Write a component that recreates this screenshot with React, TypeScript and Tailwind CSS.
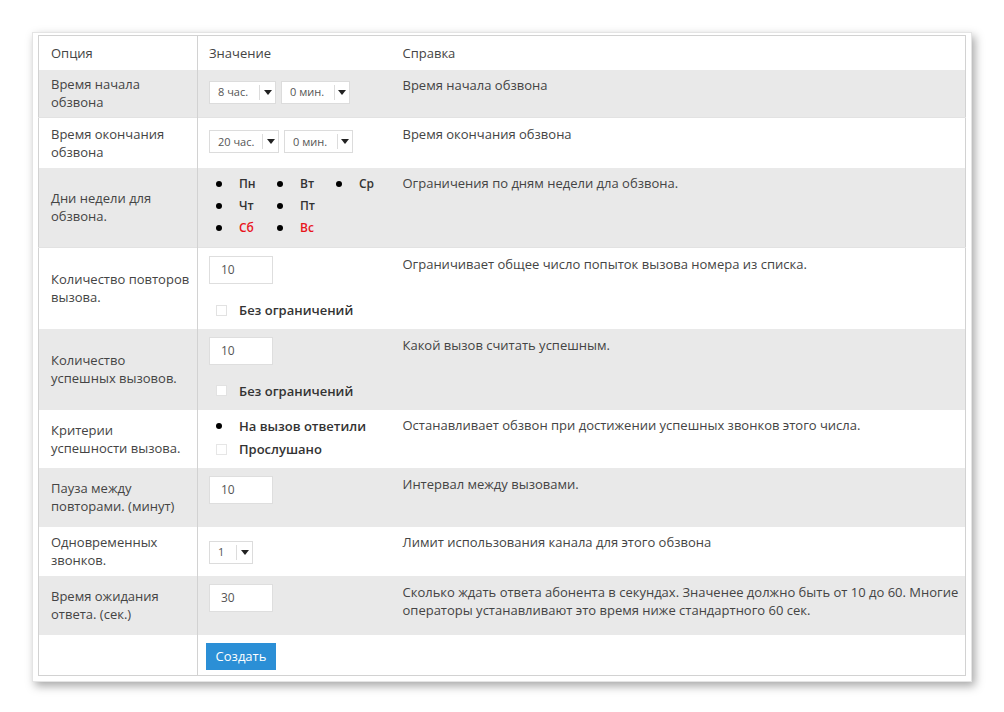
const rowCls = "align-top";
const labelCls = "border-r border-[#d2d2d2] pl-[12px] pr-[6px] align-middle";

function Select({ label, w, split }: { label: string; w: number; split: number }) {
  return (
    <div
      className="inline-flex h-[23px] items-center border border-[#dcdcdc] bg-white text-[11px] text-[#555]"
      style={{ width: w }}
    >
      <span className="pl-[8px]" style={{ width: split }}>
        {label}
      </span>
      <span className="flex h-[15px] flex-1 items-center justify-center border-l border-[#dcdcdc]">
        <span className="h-0 w-0 border-x-[4px] border-t-[5px] border-x-transparent border-t-[#222]" />
      </span>
    </div>
  );
}

function NumInput({ value }: { value: string }) {
  return (
    <div className="flex h-[28px] w-[64px] items-center border border-[#dedede] bg-white pl-[11px] text-[12px] text-[#555]">
      {value}
    </div>
  );
}

function Check({ label }: { label: string }) {
  return (
    <div className="flex items-center leading-[18px]">
      <span className="ml-[7px] h-[11px] w-[11px] border border-[#e2e2e2] bg-white" />
      <span className="ml-[12px] font-semibold text-[#333]">{label}</span>
    </div>
  );
}

function Dot() {
  return <span className="ml-[7px] h-[6px] w-[6px] rounded-full bg-black" />;
}

function Day({ label, red }: { label: string; red?: boolean }) {
  return (
    <div className="flex items-center">
      <Dot />
      <span className={"ml-[17px] font-semibold " + (red ? "text-[#e8141b]" : "text-[#333]")}>{label}</span>
    </div>
  );
}

export default function App() {
  return (
    <div className="min-h-screen bg-white pl-[32px] pt-[32px] font-['Open_Sans',sans-serif] text-[13px] text-[#444]">
      <div className="w-[940px] border border-[#e4e4e4] bg-white pb-[5px] pl-[5px] pr-[5px] pt-[2px] shadow-[3px_4px_9px_rgba(0,0,0,0.35)]">
        <table className="w-[928px] table-fixed border-collapse border border-[#d2d2d2] leading-[18px]">
          <colgroup>
            <col className="w-[159px]" />
            <col className="w-[195px]" />
            <col />
          </colgroup>
          <tbody>
            {/* header */}
            <tr className="h-[34px]">
              <td className="border-r border-[#d2d2d2] pl-[12px] align-middle">Опция</td>
              <td className="pl-[11px] align-middle">Значение</td>
              <td className="pl-[10px] align-middle">Справка</td>
            </tr>

            <tr className={"h-[48px] bg-[#e9e9e9] " + rowCls}>
              <td className={labelCls}>Время начала обзвона</td>
              <td className="pl-[11px] pt-[11px]">
                <div className="flex gap-[5px]">
                  <Select label="8 час." w={67} split={49} />
                  <Select label="0 мин." w={69} split={52} />
                </div>
              </td>
              <td className="pl-[10px] pt-[6px]">Время начала обзвона</td>
            </tr>

            <tr className={"h-[50px] border-t border-[#e2e2e2] " + rowCls}>
              <td className={labelCls}>Время окончания обзвона</td>
              <td className="pl-[11px] pt-[12px]">
                <div className="flex gap-[5px]">
                  <Select label="20 час." w={70} split={52} />
                  <Select label="0 мин." w={69} split={52} />
                </div>
              </td>
              <td className="pl-[10px] pt-[7px]">Время окончания обзвона</td>
            </tr>

            <tr className={"h-[80px] bg-[#e9e9e9] " + rowCls}>
              <td className={labelCls}>Дни недели для обзвона.</td>
              <td className="pl-[11px] pt-[5px]">
                <div className="grid grid-cols-[61px_59px_60px] text-[12px] leading-[22px]">
                  <Day label="Пн" />
                  <Day label="Вт" />
                  <Day label="Ср" />
                  <Day label="Чт" />
                  <Day label="Пт" />
                  <div />
                  <Day label="Сб" red />
                  <Day label="Вс" red />
                </div>
              </td>
              <td className="pl-[10px] pt-[6px]">Ограничения по дням недели дла обзвона.</td>
            </tr>

            <tr className={"h-[81px] border-t border-[#e2e2e2] " + rowCls}>
              <td className={labelCls}>Количество повторов вызова.</td>
              <td className="pl-[11px] pt-[8px]">
                <NumInput value="10" />
                <div className="mt-[17px]">
                  <Check label="Без ограничений" />
                </div>
              </td>
              <td className="pl-[10px] pt-[7px]">Ограничивает общее число попыток вызова номера из списка.</td>
            </tr>

            <tr className={"h-[81px] bg-[#e9e9e9] " + rowCls}>
              <td className={labelCls}>Количество успешных вызовов.</td>
              <td className="pl-[11px] pt-[8px]">
                <NumInput value="10" />
                <div className="mt-[17px]">
                  <Check label="Без ограничений" />
                </div>
              </td>
              <td className="pl-[10px] pt-[7px]">Какой вызов считать успешным.</td>
            </tr>

            <tr className={"h-[58px] " + rowCls}>
              <td className={labelCls}>Критерии успешности вызова.</td>
              <td className="pl-[11px] pt-[5px]">
                <div className="flex items-center leading-[23px]">
                  <Dot />
                  <span className="ml-[17px] font-semibold text-[#333]">На вызов ответили</span>
                </div>
                <div className="flex items-center leading-[23px]">
                  <span className="ml-[7px] h-[11px] w-[11px] border border-[#e6e6e6] bg-white" />
                  <span className="ml-[12px] font-semibold text-[#333]">Прослушано</span>
                </div>
              </td>
              <td className="pl-[10px] pt-[6px]">
                Останавливает обзвон при достижении успешных звонков этого числа.
              </td>
            </tr>

            <tr className={"h-[59px] bg-[#e9e9e9] " + rowCls}>
              <td className={labelCls}>Пауза между повторами. (минут)</td>
              <td className="pl-[11px] pt-[8px]">
                <NumInput value="10" />
              </td>
              <td className="pl-[10px] pt-[7px]">Интервал между вызовами.</td>
            </tr>

            <tr className={"h-[49px] " + rowCls}>
              <td className={labelCls}>Одновременных звонков.</td>
              <td className="pl-[11px] pt-[14px]">
                <Select label="1" w={44} split={26} />
              </td>
              <td className="pl-[10px] pt-[6px]">Лимит использования канала для этого обзвона</td>
            </tr>

            <tr className={"h-[59px] bg-[#e9e9e9] " + rowCls}>
              <td className={labelCls}>Время ожидания ответа. (сек.)</td>
              <td className="pl-[11px] pt-[8px]">
                <NumInput value="30" />
              </td>
              <td className="pl-[10px] pt-[7px]">
                Сколько ждать ответа абонента в секундах. Значенее должно быть от 10 до 60. Многие операторы
                устанавливают это время ниже стандартного 60 сек.
              </td>
            </tr>

            <tr className={"h-[41px] " + rowCls}>
              <td className="border-r border-[#d2d2d2]" />
              <td className="pl-[8px] pt-[8px]">
                <button className="h-[27px] w-[70px] bg-[#2b8fd6] text-[13px] text-white">Создать</button>
              </td>
              <td />
            </tr>
          </tbody>
        </table>
      </div>
    </div>
  );
}
